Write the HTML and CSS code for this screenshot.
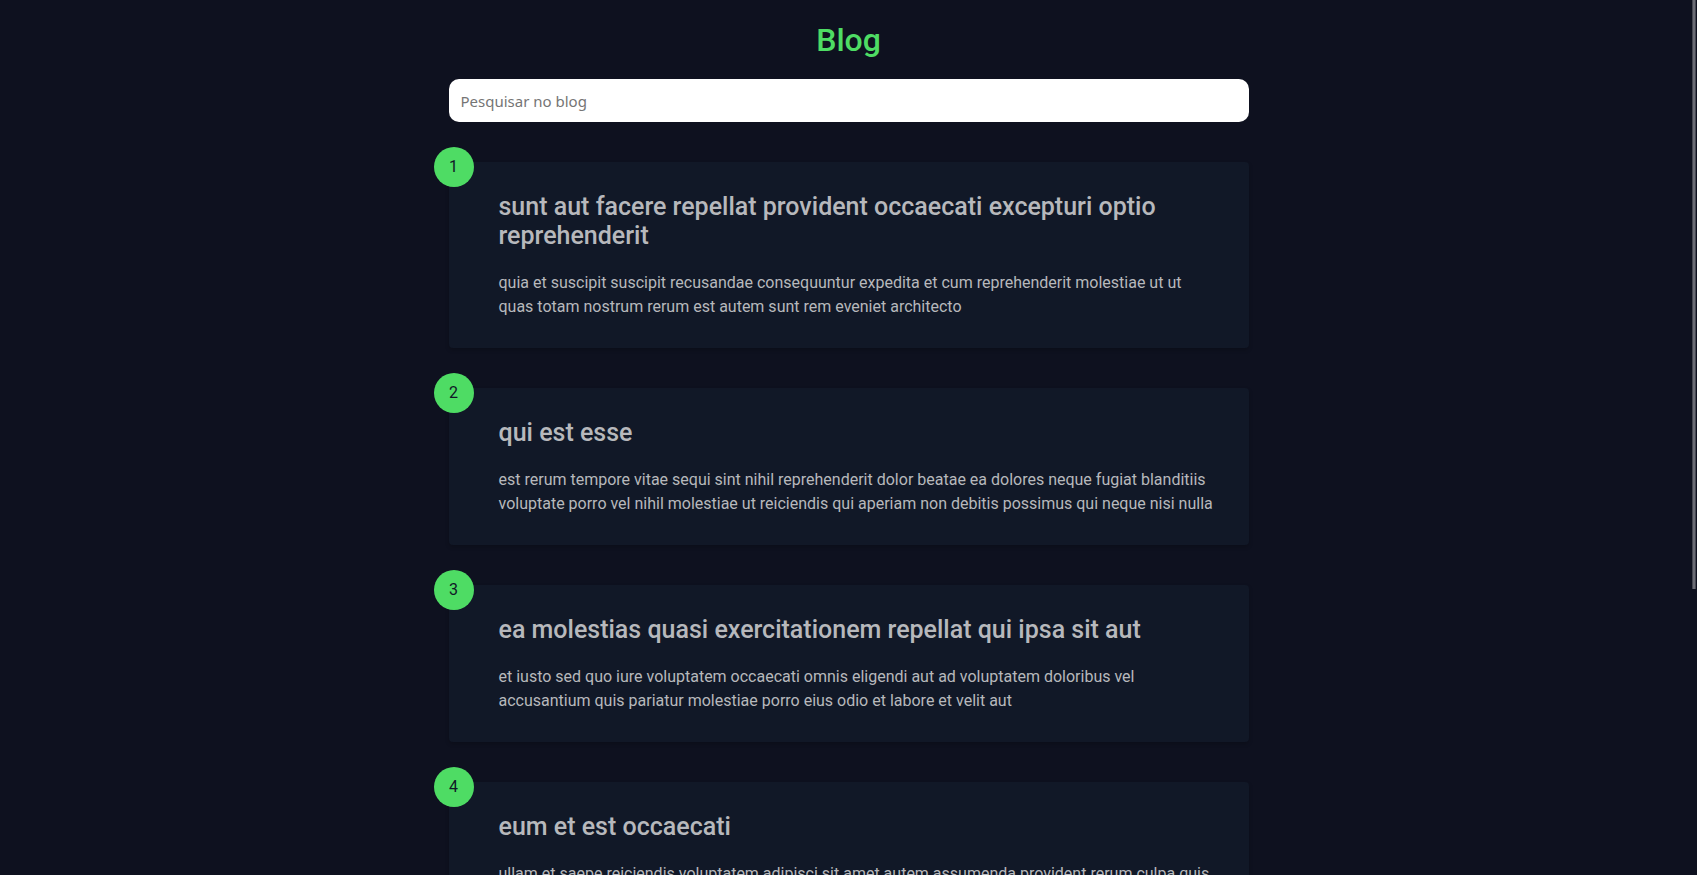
FILE: index.html
```html
<!DOCTYPE html>
<html lang="pt-BR">
<head>
<meta charset="utf-8">
<meta name="viewport" content="width=device-width, initial-scale=1">
<title>Blog</title>
<link rel="stylesheet" href="styles.css">
</head>
<body>
<main class="container">
  <h1 class="title">Blog</h1>
  <input class="search" type="search" placeholder="Pesquisar no blog" aria-label="Pesquisar no blog">
  <div class="posts">
    <article class="post">
      <span class="number">1</span>
      <h2 class="post-title">sunt aut facere repellat provident occaecati excepturi optio reprehenderit</h2>
      <p class="post-body">quia et suscipit suscipit recusandae consequuntur expedita et cum reprehenderit molestiae ut ut quas totam nostrum rerum est autem sunt rem eveniet architecto</p>
    </article>
    <article class="post">
      <span class="number">2</span>
      <h2 class="post-title">qui est esse</h2>
      <p class="post-body">est rerum tempore vitae sequi sint nihil reprehenderit dolor beatae ea dolores neque fugiat blanditiis voluptate porro vel nihil molestiae ut reiciendis qui aperiam non debitis possimus qui neque nisi nulla</p>
    </article>
    <article class="post">
      <span class="number">3</span>
      <h2 class="post-title">ea molestias quasi exercitationem repellat qui ipsa sit aut</h2>
      <p class="post-body">et iusto sed quo iure voluptatem occaecati omnis eligendi aut ad voluptatem doloribus vel accusantium quis pariatur molestiae porro eius odio et labore et velit aut</p>
    </article>
    <article class="post">
      <span class="number">4</span>
      <h2 class="post-title">eum et est occaecati</h2>
      <p class="post-body">ullam et saepe reiciendis voluptatem adipisci sit amet autem assumenda provident rerum culpa quis</p>
    </article>
  </div>
</main>
<div class="scroll-thumb" aria-hidden="true"></div>
</body>
</html>
```
FILE: styles.css
```css
* {
  margin: 0;
  padding: 0;
  box-sizing: border-box;
}

html {
  scrollbar-width: none;
}

body {
  background: #0e111f;
  color: #b7b8bc;
  font-family: Roboto, sans-serif;
  font-size: 16px;
  line-height: 24px;
  height: 100vh;
  overflow: hidden;
}

.container {
  max-width: 800px;
  margin: 0 auto;
  padding-top: 21px;
}

.title {
  color: #4edc64;
  font-size: 32px;
  font-weight: 500;
  line-height: 38px;
  text-align: center;
  margin-bottom: 20px;
}

.search {
  appearance: none;
  display: block;
  width: 100%;
  padding: 12px;
  border: 0;
  border-radius: 10px;
  background: #fff;
  color: #222;
  font-family: "Noto Sans", sans-serif;
  font-size: 15px;
  line-height: 19px;
  height: 43px;
  margin-bottom: 40px;
}

.search::placeholder {
  color: #757575;
}

.posts {
  display: grid;
  gap: 40px;
}

.post {
  position: relative;
  padding: 30px 30px 29px 50px;
  background: #111827;
  border-radius: 4px;
  box-shadow: 0 2px 4px rgba(0, 0, 0, 0.2);
}

.number {
  position: absolute;
  top: -15px;
  left: -15px;
  width: 40px;
  height: 40px;
  border-radius: 50%;
  background: #4edc64;
  color: #111827;
  line-height: 40px;
  text-align: center;
}

.post-title {
  font-size: 25px;
  font-weight: 500;
  line-height: 29px;
  margin-bottom: 21px;
}

.scroll-thumb {
  position: fixed;
  top: 0;
  right: 1px;
  width: 4px;
  height: 589px;
  background: #6c6d76;
  border: solid #474953;
  border-width: 0 1px;
}
```
